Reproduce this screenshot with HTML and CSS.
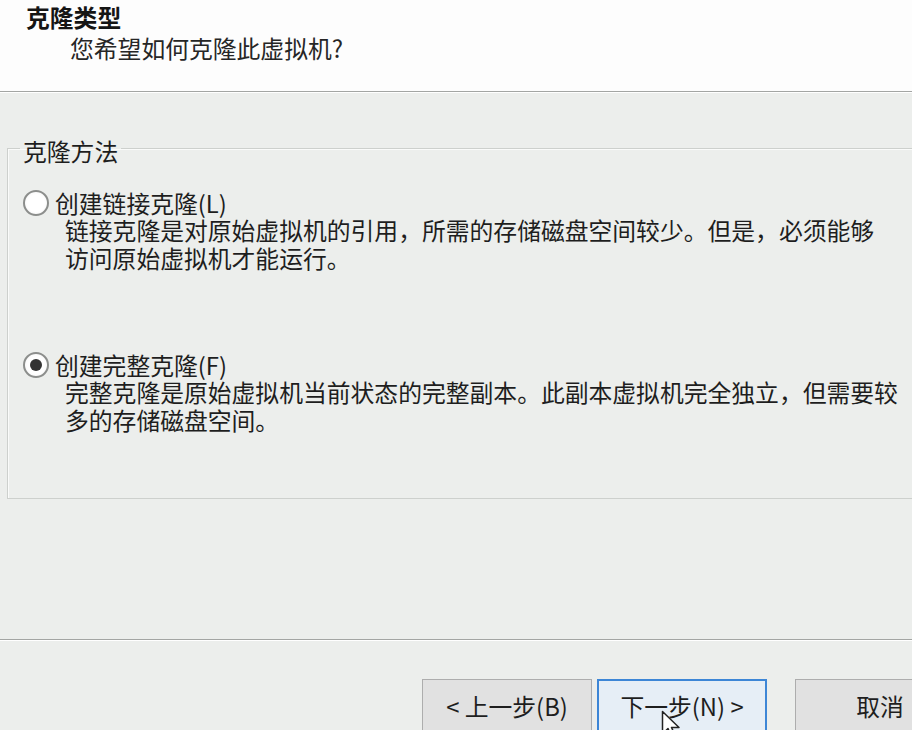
FILE: index.html
```html
<!DOCTYPE html>
<html lang="zh-CN">
<head>
    <meta charset="UTF-8">
    <meta name="viewport" content="width=device-width, initial-scale=1.0">
    <title>克隆虚拟机向导</title>
    <link rel="stylesheet" href="styles.css">
</head>
<body>
<div class="dialog">
    <div class="header">
        <h1 class="title">克隆类型</h1>
        <p class="subtitle">您希望如何克隆此虚拟机?</p>
    </div>

    <div class="main">
        <fieldset class="group">
            <legend>克隆方法</legend>

            <div class="option">
                <label class="opt_row"><input type="radio" name="method" class="radio"> 创建链接克隆(L)</label>
                <p class="desc">链接克隆是对原始虚拟机的引用，所需的存储磁盘空间较少。但是，必须能够<br>访问原始虚拟机才能运行。</p>
            </div>

            <div class="option second">
                <label class="opt_row"><input type="radio" name="method" class="radio" checked> 创建完整克隆(F)</label>
                <p class="desc">完整克隆是原始虚拟机当前状态的完整副本。此副本虚拟机完全独立，但需要较<br>多的存储磁盘空间。</p>
            </div>
        </fieldset>
    </div>

    <div class="footer">
        <button type="button" class="btn">&lt; 上一步(B)</button>
        <button type="button" class="btn btn_default">下一步(N) &gt;</button>
        <button type="button" class="btn btn_cancel">取消</button>
    </div>

    <svg class="cursor" width="26" height="30" viewBox="0 0 26 30">
        <path d="M1.5 1.5 L1.5 24 L7 18.5 L11 27.5 L14.5 26 L10.5 17.5 L18 17.5 Z" fill="#fff" stroke="#222" stroke-width="1.5" stroke-linejoin="round"/>
    </svg>
</div>
</body>
</html>
```

FILE: styles.css
```css
*{margin:0;padding:0;box-sizing:border-box;}
html,body{width:912px;height:730px;overflow:hidden;}
body{background:#eceeec;font-family:"Noto Sans CJK SC","Noto Sans",sans-serif;font-size:23.8px;color:#1e1e1e;}

.dialog{width:980px;position:relative;}

.header{height:92px;background:#fdfdfd;border-bottom:1px solid #a3a5a3;box-shadow:0 1px 0 #fff;padding:4px 0 0 26px;}
.title{font-size:23.8px;font-weight:700;line-height:26px;color:#151515;}
.subtitle{line-height:28px;margin:4px 0 0 44px;color:#262626;}

.main{height:547px;padding:39px 7px 0 7px;}
.group{border:1px solid #cdd0cd;box-shadow:inset 1px 1px 0 #fafbfa;padding:0 12px 64px 12px;}
.group legend{padding:6px 3px 0 3px;line-height:28px;}

.option{margin:25px 0 0 3px;}
.option.second{margin-top:80px;}
.opt_row{display:flex;align-items:center;height:26px;line-height:26px;}
.radio{appearance:none;-webkit-appearance:none;width:26px;height:26px;border-radius:50%;border:2px solid #8c8e8c;background:radial-gradient(circle,#fff 55%,#f0f0f0);margin-right:6px;display:grid;place-items:center;flex:none;}
.radio:checked::after{content:"";width:12px;height:12px;border-radius:50%;background:#333;}
.desc{padding-left:42px;line-height:28px;}

.footer{height:91px;border-top:1px solid #a3a5a3;box-shadow:inset 0 1px 0 #fff;display:flex;justify-content:flex-end;padding:39px 15px 0 0;}
.btn{width:170px;height:54px;border:1px solid #adadad;background:#e1e1e1;font:inherit;color:#1e1e1e;line-height:1;}
.btn_default{margin-left:5px;border:2px solid #3d86d6;background:#e6eef6;}
.btn_cancel{margin-left:28px;}

.cursor{position:absolute;left:661px;top:710px;}
```
